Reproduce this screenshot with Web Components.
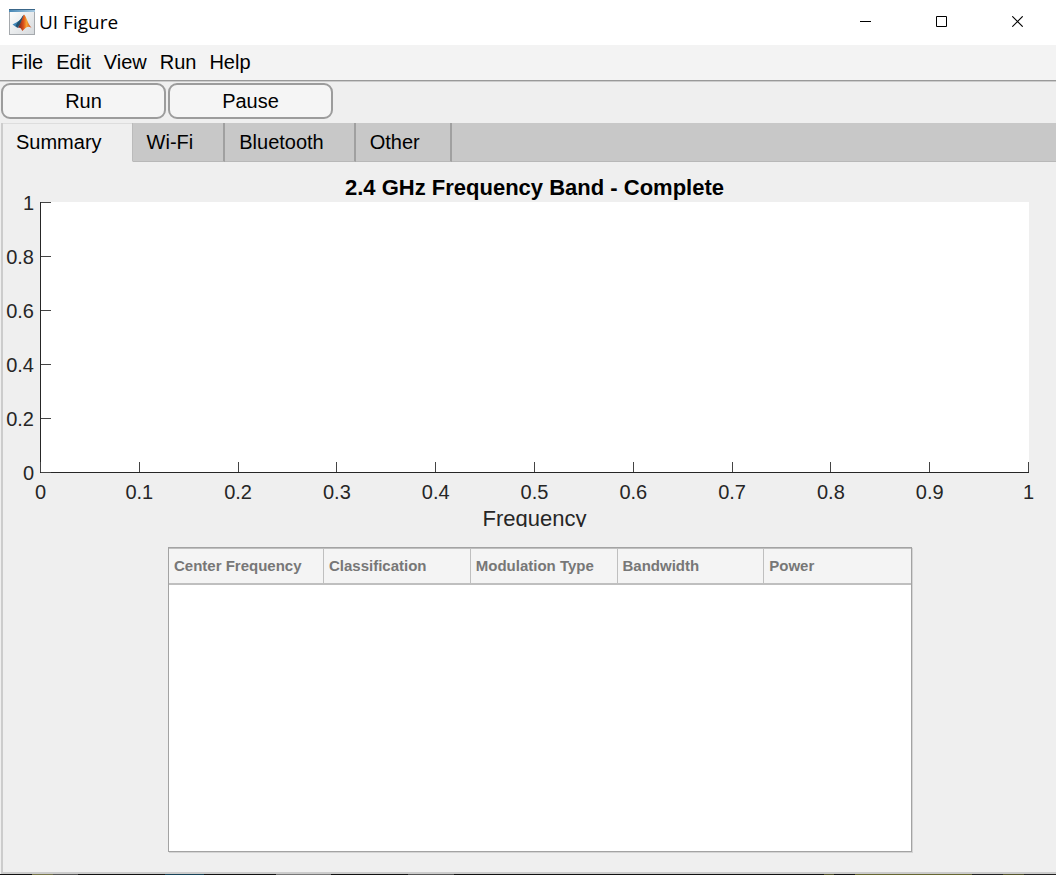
<!DOCTYPE html>
<html lang="en">
<head>
<meta charset="utf-8">
<title>UI Figure</title>
<style>
  html, body { margin: 0; }
  body { font: 20px/24px "Liberation Sans", Arial, sans-serif; color: #000; background: #efefef; }
</style>
</head>
<body>
<app-window>
  <title-bar slot="title">UI Figure</title-bar>
  <menu-bar slot="menu" items="File,Edit,View,Run,Help"></menu-bar>
  <tool-button slot="tools">Run</tool-button>
  <tool-button slot="tools">Pause</tool-button>
  <tab-panel tabs="Summary,Wi-Fi,Bluetooth,Other">
    <axes-chart heading="2.4 GHz Frequency Band - Complete" xlabel="Frequency"
      xticks="0,0.1,0.2,0.3,0.4,0.5,0.6,0.7,0.8,0.9,1" yticks="1,0.8,0.6,0.4,0.2,0"></axes-chart>
    <data-table columns="Center Frequency,Classification,Modulation Type,Bandwidth,Power"></data-table>
  </tab-panel>
</app-window>

<script>
const list = (el, name) => (el.getAttribute(name) || '').split(',');
class Base extends HTMLElement {
  connectedCallback() {
    if (this.shadowRoot) return;
    this.attachShadow({ mode: 'open' }).innerHTML = '<style>*{box-sizing:border-box}</style>' + this.view();
  }
}

customElements.define('app-window', class extends Base {
  view() { return `
    <style>
      :host { display: flex; flex-direction: column; min-height: 100vh; box-sizing: border-box; }
      .tools { display: flex; gap: 2px; padding: 1px; margin-bottom: 3px; }
      main { flex: 1; display: flex; flex-direction: column; }
      .desktop { height: 1px; background: linear-gradient(90deg, #111 3%, #77754a 3% 5%, #555 5% 7.4%, #111 7.4% 15.6%, #174358 15.6% 19.3%, #111 19.3% 26.1%, #777 26.1% 31.3%, #111 31.3% 38.6%, #555 38.6% 43%, #111 43% 78%, #55552c 78% 79%, #111 79% 81%, #676731 81% 92%, #222 92% 95%, #55552c 95% 97%, #222 97%); }
    </style>
    <slot name="title"></slot><slot name="menu"></slot>
    <div class="tools"><slot name="tools"></slot></div>
    <main><slot></slot></main>
    <div class="desktop"></div>`; }
});

customElements.define('title-bar', class extends Base {
  view() { return `
    <style>
      :host { display: flex; align-items: center; height: 45px; background: #fff; box-sizing: border-box; padding: 0 0 2px 9px;
        font-family: "Open Sans", "Noto Sans", sans-serif; font-size: 19px; }
      .name { flex: 1; padding-left: 4px; }
      svg { display: block; }
      button { width: 76px; height: 43px; padding: 0; border: 0; background: none; display: grid; place-items: center; }
      .controls { display: flex; }
    </style>
    <svg width="26" height="26" viewBox="0 0 26 26" aria-hidden="true">
      <defs>
        <linearGradient id="p" x1="0" y1="0" x2="1" y2="1"><stop offset="0" stop-color="#fff"/><stop offset="1" stop-color="#d5d9dc"/></linearGradient>
        <linearGradient id="b"><stop offset="0" stop-color="#4787b5"/><stop offset="1" stop-color="#a9cbe2"/></linearGradient>
        <linearGradient id="o"><stop offset="0" stop-color="#6e1718"/><stop offset=".42" stop-color="#dd531b"/><stop offset=".65" stop-color="#f6a534"/><stop offset="1" stop-color="#c93b16"/></linearGradient>
      </defs>
      <rect x=".5" y=".5" width="25" height="25" fill="url(#p)" stroke="#a5a9ad"/>
      <path d="M0 0h26v3H0z" fill="url(#b)"/><path d="M0 0h26v1H0z" fill="#3a6689"/>
      <path d="M3.500 15.500 9 12.500C11 12 12.500 8.500 14.800 5.800L13 13l-4.500 6z" fill="#4187b9"/>
      <path d="M9 12.500C11 12 12.500 8.500 14.800 5.800L11.500 15 8.500 18.500 6.500 17z" fill="#235270"/>
      <path d="M15 5.500c2.500 2 3.500 9 7.500 13.300-3.500-2.300-5-.8-9.200 3.200-1-2.500-2.200-3.600-4.600-3.500 2.800-2.500 4-8.500 6.300-13z" fill="url(#o)"/>
    </svg>
    <span class="name"><slot></slot></span>
    <div class="controls">
      <button aria-label="Minimize"><svg width="12" height="11"><path d="M0 5.500h11" stroke="#000"/></svg></button>
      <button aria-label="Maximize"><svg width="12" height="11"><path d="M.5.5h10v10H.5z" fill="none" stroke="#000"/></svg></button>
      <button aria-label="Close"><svg width="12" height="11"><path d="M.3.3l10.400 10.400M10.700.3.3 10.700" fill="none" stroke="#000" stroke-width="1.100"/></svg></button>
    </div>`; }
});

customElements.define('menu-bar', class extends Base {
  view() { return `
    <style>
      :host { display: block; background: #f3f3f3; border-bottom: 1px solid #999; box-shadow: 0 1px #ccc; margin-bottom: 1px; }
      nav { display: flex; gap: 13px; height: 35px; padding: 0 0 2px 11px; }
      button { font: inherit; color: inherit; border: 0; background: none; padding: 0; }
    </style>
    <nav>${list(this, 'items').map(t => `<button>${t}</button>`).join('')}</nav>`; }
});

customElements.define('tool-button', class extends Base {
  view() { return `
    <style>
      :host { display: block; width: 165px; }
      button { display: block; width: 100%; height: 36px; padding: 0; font: inherit; color: inherit;
        background: #f5f5f5; border: 2px solid #9c9c9c; border-radius: 9px; }
    </style>
    <button><slot></slot></button>`; }
});

customElements.define('tab-panel', class extends Base {
  view() { return `
    <style>
      :host { flex: 1; display: flex; flex-direction: column; box-sizing: border-box; margin-left: 1px;
        border-left: 2px solid #ccc; border-bottom: 2px solid #ccc; }
      .strip { display: flex; height: 39px; background: #c8c8c8; }
      .tabs { display: flex; }
      button { font: inherit; color: inherit; padding: 0 30px 0 14px; border: 0; border-right: 2px solid #a0a0a0;
        border-bottom: 1px solid #b8b8b8; background: #c8c8c8; }
      button[aria-selected=true] { padding: 0 30px 0 13px; background: #efefef; border-bottom-color: #efefef;
        border-right: 1px solid #bbb; box-shadow: inset 0 1px #ddd; }
      .rest { flex: 1; border-bottom: 1px solid #b8b8b8; }
      section { flex: 1; display: flex; flex-direction: column; }
    </style>
    <div class="strip"><div class="tabs" role="tablist">${list(this, 'tabs').map((t, i) => `<button role="tab" aria-selected="${!i}">${t}</button>`).join('')}</div><div class="rest"></div></div>
    <section role="tabpanel"><slot></slot></section>`; }
});

customElements.define('axes-chart', class extends Base {
  view() {
    const x = list(this, 'xticks'), y = list(this, 'yticks');
    const labels = a => a.map(t => `<span>${t}</span>`).join('');
    const marks = a => a.map(() => '<i></i>').join('');
    return `
    <style>
      :host { display: grid; grid-template-columns: 37px 1fr; padding: 12px 27px 0 0; color: #262626; }
      h2 { grid-column: 2; margin: 0; padding-bottom: 1px; font-size: 22px; line-height: 27px; text-align: center; color: #000; }
      .y { display: flex; flex-direction: column; justify-content: space-between; padding-right: 6px; }
      .y span { height: 1px; display: flex; align-items: center; justify-content: flex-end; }
      .plot { height: 271px; background: #fff; border: solid #262626; border-width: 0 0 1px 1px; display: grid; }
      .plot div { grid-area: 1 / 1; display: flex; justify-content: space-between; }
      .xm { align-items: flex-end; margin-left: -1px; }
      .xm i { width: 1px; height: 10px; background: #444; }
      .ym { flex-direction: column; margin-bottom: -1px; }
      .ym i { width: 10px; height: 1px; background: #444; }
      .x { grid-column: 2; display: flex; justify-content: space-between; padding-top: 7px; }
      .x span { width: 1px; display: flex; justify-content: center; }
      .label { grid-column: 2; height: 23px; overflow: hidden; text-align: center; font-size: 22px; line-height: 30px; }
    </style>
    <h2>${this.getAttribute('heading')}</h2>
    <div class="y">${labels(y)}</div>
    <div class="plot"><div class="xm">${marks(x)}</div><div class="ym">${marks(y)}</div></div>
    <div class="x">${labels(x)}</div>
    <div class="label">${this.getAttribute('xlabel')}</div>`; }
});

customElements.define('data-table', class extends Base {
  view() { return `
    <style>
      :host { flex: 1; display: flex; flex-direction: column; min-height: 120px; box-sizing: border-box;
        margin: 20px 144px 20px 165px; background: #fff; border: 1px solid #a3a3a3; box-shadow: 1px 1px #d4d4d4; }
      table { width: 100%; table-layout: fixed; border-collapse: separate; border-spacing: 0; }
      th { height: 37px; padding: 0 0 0 5px; text-align: left; font-size: 15px; line-height: 18px; color: #777;
        background: #f4f4f4; border: solid #bfbfbf; border-width: 1px 1px 2px 0; white-space: nowrap; }
      th:first-child { width: 155px; }
      th:last-child { border-right: 0; }
    </style>
    <table><thead><tr>${list(this, 'columns').map(t => `<th scope="col">${t}</th>`).join('')}</tr></thead><tbody></tbody></table>`; }
});
</script>
</body>
</html>
